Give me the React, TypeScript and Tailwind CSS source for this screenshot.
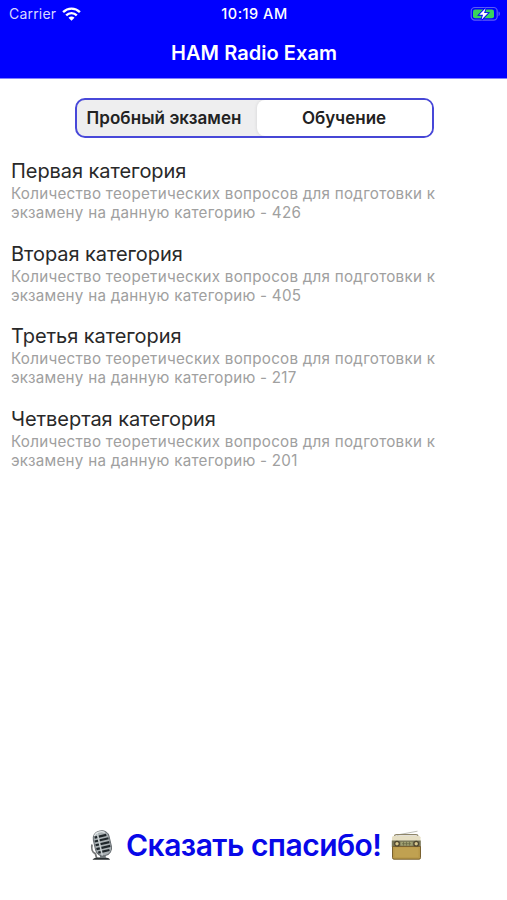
const categories = [
  { title: 'Первая категория', count: 426 },
  { title: 'Вторая категория', count: 405 },
  { title: 'Третья категория', count: 217 },
  { title: 'Четвертая категория', count: 201 },
];

function WifiIcon() {
  return (
    <svg width="19" height="14" viewBox="0 0 19 14" fill="none" stroke="white" strokeWidth="2.4">
      <path d="M1.1 5.1C5.8.5 13.2.5 17.9 5.1" />
      <path d="M4.2 8.3c3-2.9 7.6-2.9 10.6 0" />
      <path d="M6.5 10.7c1.7-1.6 4.3-1.6 6 0L9.5 13.7z" fill="white" stroke="none" />
    </svg>
  );
}

function BatteryIcon() {
  return (
    <svg width="32" height="16" viewBox="0 0 32 16">
      <rect x="1.2" y="1.5" width="26" height="12.6" rx="3.6" fill="none" stroke="#5c5cf5" strokeWidth="1.2" />
      <path d="M28.5 5.5c1.9.6 1.9 3.9 0 4.5z" fill="#5c5cf5" />
      <rect x="3" y="3.5" width="21" height="8.8" rx="2" fill="#39d35c" />
      <path d="M15.6 2.2 9.2 8.8h3.8l-1.5 5L18 7.1h-3.9z" fill="white" stroke="#0000ff" strokeWidth="1.8" paintOrder="stroke" />
    </svg>
  );
}

function MicrophoneIcon() {
  return (
    <svg width="26" height="33" viewBox="0 0 26 33" fill="none">
      <path d="M4 15.5c-.8 4 .3 8 3.4 9.2l1.3 4.5" stroke="#77797a" strokeWidth="1.8" />
      <path d="M4.5 30.8c1-1.8 3-2.3 9-2.3s8 .7 8.5 2.3z" fill="#292e30" />
      <path d="M12 23h5l1 6h-6z" fill="#70777a" />
      <g transform="translate(1 0) rotate(-13 12.5 14)">
        <rect x="5.2" y="2" width="16.2" height="25" rx="7.4" fill="#a9b0b3" stroke="#686e72" />
        <path d="M7 7.2h12M6.2 11h14.2M6.2 14.9h14.2M6.2 18.8h14.2M7.2 22.6h11.5" stroke="#20272b" strokeWidth="2.2" />
        <path d="M10.5 2.5v24" stroke="#c7ced0" strokeWidth="1.6" />
        <path d="M7 5.5c2-3 8-4 11-1" stroke="#e3e7e8" strokeWidth="1.2" />
      </g>
    </svg>
  );
}

function RadioIcon() {
  return (
    <svg width="31" height="32" viewBox="0 0 31 32" fill="none">
      <path d="M6 6 26.5 2.2" stroke="#bfc0b9" strokeWidth="1" />
      <path d="M3.5 8V7q0-1.4 2-1.4h19.5q2 0 2 1.4v1" stroke="#8e8568" strokeWidth="1.1" />
      <path d="M1 8.2q.3-1.2 2-1.2h24.5q1.7 0 2 1.2v4H1z" fill="#e6dfc4" />
      <path d="M.8 11.5h29v6.5H.8z" fill="#777557" />
      <path d="M1.5 17.5h28v11.2q0 1.5-1.5 1.5H3q-1.5 0-1.5-1.5z" fill="#b89848" stroke="#796130" />
      <path d="M3.5 18.5h24v9.8h-24z" fill="#c0a151" />
      <path d="M9.5 12.8h12.2v3.8H9.5z" fill="#a0a071" />
      <path d="M11 14.7h9M12.5 12.8v3.8M15.5 12.8v3.8M18.5 12.8v3.8" stroke="#666544" strokeWidth=".7" />
      <circle cx="6" cy="14.7" r="2.3" fill="#d7c88f" stroke="#4d452f" strokeWidth="1.2" />
      <circle cx="25.2" cy="14.7" r="2.3" fill="#d7c88f" stroke="#4d452f" strokeWidth="1.2" />
    </svg>
  );
}

export default function App() {
  return (
    <div className="flex h-[900px] w-[507px] flex-col bg-white font-['Inter','Liberation_Sans',sans-serif] whitespace-nowrap">
      <header className="h-[79px] border-b border-[#8080ff] bg-[#0000ff] text-white">
        <div className="grid h-[27px] grid-cols-3 items-center pr-[5px] pl-[9px] text-[14px]">
          <div className="flex items-center gap-1.5 text-[#d8d8ff]">
            <span className="tracking-[0.2px]">Carrier</span>
            <WifiIcon />
          </div>
          <span className="justify-self-center pr-0.5 text-[14.5px] font-medium tracking-[0.5px]">10:19 AM</span>
          <div className="justify-self-end"><BatteryIcon /></div>
        </div>
        <h1 className="pt-3 pl-px text-center text-[20px] leading-7 font-semibold tracking-[0.06px]">HAM Radio Exam</h1>
      </header>

      <div className="mt-[19px] ml-[75px] flex h-10 w-[359px] rounded-[10px] border-2 border-[#4848d9] bg-[#eeeeef] text-[17px] font-semibold text-[#222]">
        <button className="w-[180px] pt-0.5 pr-1.5 tracking-[0.07px]">Пробный экзамен</button>
        <button className="flex-1 rounded-lg bg-white pt-0.5 pr-px shadow-[-1px_0_3px_#0001]">Обучение</button>
      </div>

      <main className="mt-5 flex-1 pl-[11px]">
        {categories.map((category) => (
          <section key={category.title} className="h-[82.7px]">
            <h2 className="h-[26px] text-[20px] leading-[27px] tracking-[-0.06px] text-[#292929]">{category.title}</h2>
            <p className="text-[15.2px] leading-[19px] tracking-[0.26px] text-[#a0a0a0]">
              Количество теоретических вопросов для подготовки к<br />
              экзамену на данную категорию - {category.count}
            </p>
          </section>
        ))}
      </main>

      <button className="mb-[35px] flex h-10 items-center pl-[88px] text-[30px] font-semibold text-[#0808e8]">
        <MicrophoneIcon />
        <span className="ml-3 w-[257px] text-left tracking-[-0.52px]">Сказать спасибо!</span>
        <span className="ml-2"><RadioIcon /></span>
      </button>
    </div>
  );
}
